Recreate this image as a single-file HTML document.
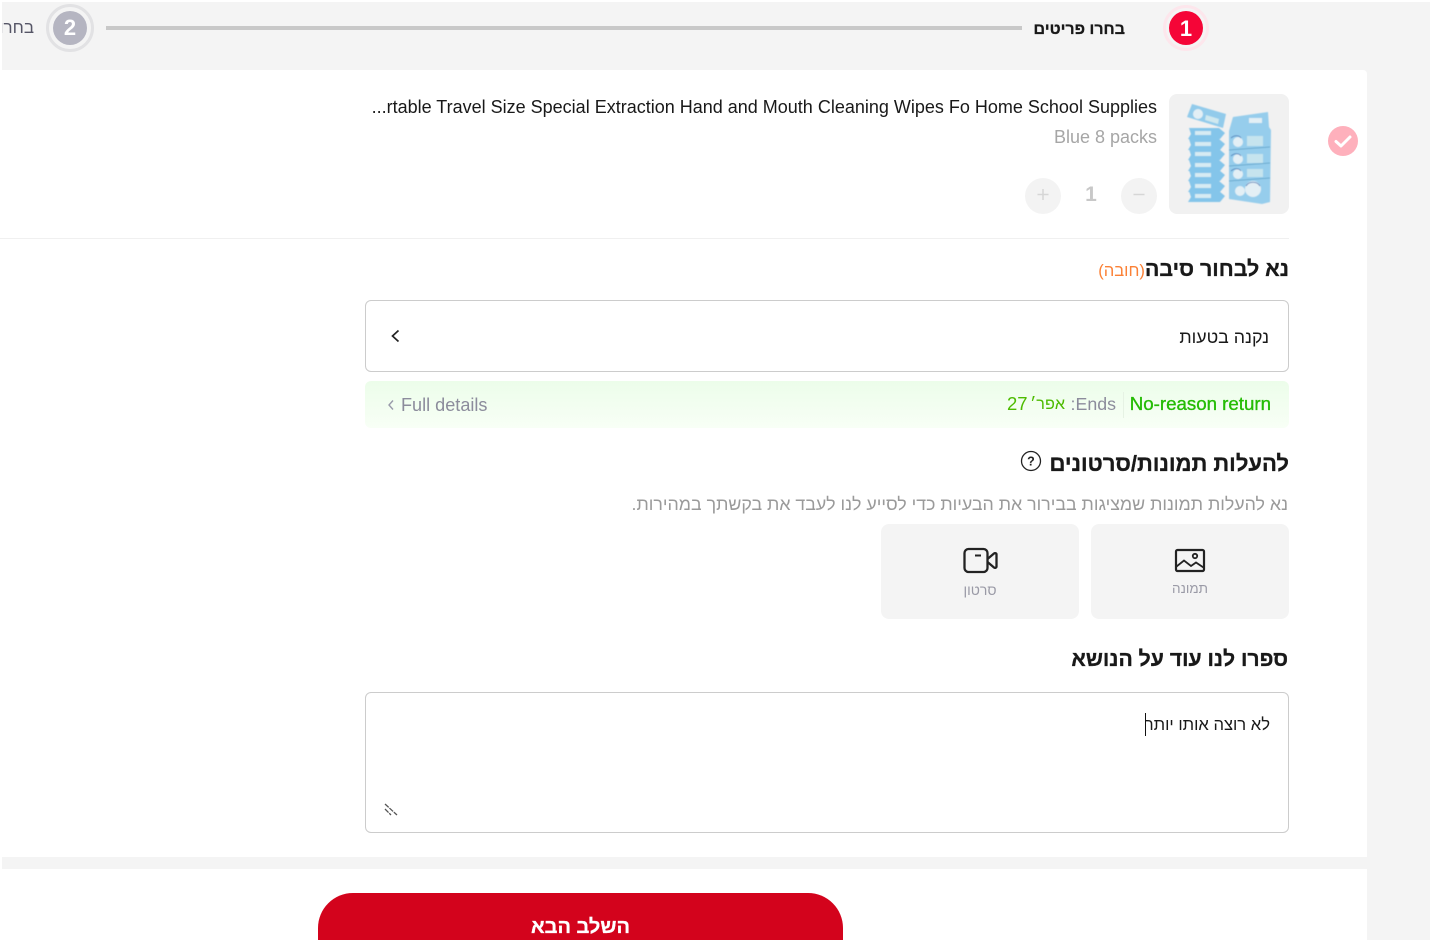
<!DOCTYPE html>
<html lang="he"><head><meta charset="utf-8"><title>החזרה</title>
<style>
html,body{margin:0;padding:0;width:1432px;height:942px;overflow:hidden;background:#fff}
body{position:relative;font-family:"Liberation Sans","DejaVu Sans",sans-serif}
.a{position:absolute;white-space:nowrap}
.r{direction:rtl;text-align:right}
.b{font-weight:700}
.h{-webkit-text-stroke:.3px #191919}
</style></head><body>
<div class="a" style="left:2px;top:2px;width:1428px;height:938px;background:#f4f4f4"></div>
<div class="a" style="left:0;top:70px;width:1367px;height:787px;background:#fff;border-radius:0 4px 0 0"></div>
<div class="a" style="left:0;top:869px;width:1367px;height:73px;background:#fff"></div>

<!-- stepper -->
<div class="a" style="left:106px;top:26px;width:916px;height:4px;background:#c8c8c8"></div>
<div class="a" style="left:1163px;top:5px;width:46px;height:46px;border-radius:50%;border:3px solid #fde6ec;box-sizing:border-box"></div>
<div class="a b" style="left:1169px;top:11px;width:34px;height:34px;line-height:36px;border-radius:50%;background:#f50537;color:#fff;text-align:center;font-size:22px">1</div>
<div class="a r b h" style="right:307px;top:20px;font-size:16px;line-height:20px;color:#191919">בחרו פריטים</div>
<div class="a" style="left:46px;top:4px;width:48px;height:48px;border-radius:50%;border:3px solid #e2e2e4;box-sizing:border-box"></div>
<div class="a b" style="left:53px;top:11px;width:34px;height:34px;line-height:34px;border-radius:50%;background:#b5b5c1;color:#fff;text-align:center;font-size:22px">2</div>
<div class="a" style="left:2px;top:18px;width:32px;height:20px;overflow:hidden"><div class="a r" style="right:0;top:0;font-size:17px;line-height:20px;color:#555566">בחרו פרטי</div></div>

<!-- product row -->
<svg class="a" style="left:1328px;top:126px" width="30" height="30" viewBox="0 0 30 30"><circle cx="15" cy="15" r="15" fill="#feb0bc"/><path d="M8 15.500l5 4.500 9-9" fill="none" stroke="#fff" stroke-width="3" stroke-linecap="round" stroke-linejoin="round"/></svg>
<svg class="a" style="left:1169px;top:94px" width="120" height="120" viewBox="0 0 120 120">
<defs><filter id="s" x="-5%" y="-5%" width="110%" height="110%"><feGaussianBlur stdDeviation=".5"/></filter></defs>
<rect width="120" height="120" rx="8" fill="#f1f1f1"/>
<g filter="url(#s)">
<path d="M23 10l34 10-3 14-36-11z" fill="#92cbeb"/><circle cx="29" cy="20" r="5" fill="#e3eff5"/><path d="M37 21l13 4-1 5-13-4z" fill="#cfe8ef"/>
<g fill="#84c5ea">
<path d="M20 34h30l6 5-5 6H19l3-5z"/><path d="M20 45h30l6 5-5 6H19l3-5z"/><path d="M20 55h30l6 5-5 6H19l3-5z"/><path d="M20 66h30l6 5-5 6H19l3-5z"/><path d="M20 76h30l6 5-5 6H19l3-5z"/><path d="M20 87h30l6 5-5 6H19l3-5z"/><path d="M20 97h30l6 5-5 6H19l3-5z"/>
</g>
<g fill="#d6ebf3"><rect x="26" y="37" width="16" height="4"/><rect x="26" y="48" width="16" height="4"/><rect x="26" y="58" width="16" height="4"/><rect x="26" y="69" width="16" height="4"/><rect x="26" y="79" width="16" height="4"/><rect x="26" y="90" width="16" height="4"/><rect x="26" y="100" width="16" height="4"/></g>
<path d="M64 23l35-5 1 15 2 3 -1 72-8 2-33-5V37z" fill="#96cdec"/>
<g fill="#e3eff5"><circle cx="69" cy="48" r="5"/><circle cx="69" cy="65" r="5"/><circle cx="69" cy="80" r="5"/><circle cx="71" cy="97" r="5"/><circle cx="84" cy="95" r="8"/></g>
<g fill="#c6e4ee"><rect x="78" y="42" width="16" height="10"/><rect x="78" y="60" width="16" height="9"/><rect x="78" y="75" width="16" height="8"/></g>
<g fill="#e3eff5"><rect x="80" y="24" width="13" height="5"/></g>
<path d="M60 56l41-3M60 72l41-3M60 87l41-3" stroke="#5a9fc6" stroke-width=".8" fill="none"/>
<path d="M62 44c3-3 8-3 10 0M62 62c3-3 8-3 10 0M62 77c3-3 8-3 10 0M77 92c3-5 11-5 14 0" stroke="#3f6fb0" stroke-width=".8" fill="none"/>
</g></svg>
<div class="a" style="right:275px;top:96px;font-size:18px;line-height:22px;color:#191919">...rtable Travel Size Special Extraction Hand and Mouth Cleaning Wipes Fo Home School Supplies</div>
<div class="a" style="right:275px;top:127px;font-size:18px;line-height:20px;color:#a6a6a6">Blue 8 packs</div>
<svg class="a" style="left:1025px;top:178px" width="132" height="36" viewBox="0 0 132 36">
<circle cx="18" cy="18" r="18" fill="#f3f3f3"/><circle cx="114" cy="18" r="18" fill="#f3f3f3"/>
<path d="M12.500 16.500h11M18 11v11M108.500 16.500h11" stroke="#d6d6d6" stroke-width="1.500" fill="none"/>
</svg>
<div class="a b" style="left:1075px;top:183px;width:32px;text-align:center;font-size:21px;line-height:24px;color:#c8c8c8">1</div>
<div class="a" style="left:0;top:238px;width:1289px;height:1px;background:#f0f0f0"></div>

<!-- reason -->
<div class="a r" style="right:143px;top:256px;line-height:26px"><span class="b h" style="font-size:21.400px;color:#191919">נא לבחור סיבה</span><span style="font-size:16.600px;color:#fb8136">(חובה)</span></div>
<div class="a" style="left:365px;top:300px;width:924px;height:72px;box-sizing:border-box;border:1px solid #ccc;border-radius:6px"></div>
<div class="a r" style="right:163px;top:326px;font-size:17.800px;line-height:22px;color:#191919">נקנה בטעות</div>
<svg class="a" style="left:389px;top:328px" width="14" height="16" viewBox="0 0 14 16"><path d="M9.500 2.500L3.500 8l6 5.500" fill="none" stroke="#222" stroke-width="1.700"/></svg>

<!-- green bar -->
<div class="a" style="left:365px;top:381px;width:924px;height:47px;border-radius:6px;background:linear-gradient(#ecfdea,#f8fff6)"></div>
<svg class="a" style="left:386px;top:398px" width="10" height="14" viewBox="0 0 10 14"><path d="M7 2.500L3 7l4 4.500" fill="none" stroke="#999aaa" stroke-width="1.400"/></svg>
<div class="a" style="left:401px;top:394px;font-size:18.100px;line-height:22px;color:#8c8c9c">Full details</div>
<div class="a" style="right:161px;top:393px;font-size:18.700px;line-height:22px;color:#25bc05;-webkit-text-stroke:.35px #25bc05">No-reason return</div>
<div class="a" style="left:1123px;top:392px;width:1px;height:26px;background:#e6f2e4"></div>
<div class="a r" style="left:1071px;width:45px;top:393px;font-size:17.800px;line-height:22px;color:#8c8c9c">Ends:</div>
<div class="a" style="left:1007px;top:393px;font-size:18.500px;line-height:22px;color:#4dbb00">27</div>
<div class="a r" style="right:367px;top:393px;font-size:16.200px;line-height:22px;color:#4dbb00">אפר׳</div>

<!-- upload -->
<div class="a r b h" style="right:143px;top:451px;font-size:22px;line-height:26px;color:#191919">להעלות תמונות/סרטונים</div>
<svg class="a" style="left:1020px;top:450px" width="22" height="22" viewBox="0 0 22 22"><circle cx="11" cy="11" r="9.500" fill="none" stroke="#222" stroke-width="1.300"/><text x="11" y="15.500" text-anchor="middle" font-family="Liberation Sans,sans-serif" font-weight="700" font-size="12.500" fill="#222">?</text></svg>
<div class="a r" style="right:144px;top:493px;font-size:17.800px;line-height:22px;color:#9a9a9a">נא להעלות תמונות שמציגות בבירור את הבעיות כדי לסייע לנו לעבד את בקשתך במהירות.</div>
<div class="a" style="left:1091px;top:524px;width:198px;height:95px;border-radius:8px;background:#f4f4f4"></div>
<div class="a" style="left:881px;top:524px;width:198px;height:95px;border-radius:8px;background:#f4f4f4"></div>
<svg class="a" style="left:1174px;top:548px" width="32" height="26" viewBox="0 0 32 26"><rect x="2" y="2" width="28" height="21" rx="1.500" fill="none" stroke="#222" stroke-width="2.200"/><path d="M2.500 18.500l7.500-6 7 5.500 5-3.500 7.500 5" fill="none" stroke="#222" stroke-width="1.800"/><circle cx="21" cy="8" r="2.200" fill="none" stroke="#222" stroke-width="1.800"/></svg>
<svg class="a" style="left:963px;top:546px" width="36" height="30" viewBox="0 0 36 30"><rect x="1.500" y="3" width="23" height="23" rx="4" fill="none" stroke="#222" stroke-width="2.300"/><path d="M12 9.500h6" stroke="#222" stroke-width="2" fill="none"/><path d="M24.500 13l6.500-5.500c1-.8 2.500-.2 2.500 1v12c0 1.200-1.500 1.800-2.500 1L24.500 16" fill="none" stroke="#222" stroke-width="2.300"/></svg>
<div class="a" style="left:1091px;top:581px;width:198px;text-align:center;direction:rtl;font-size:13.500px;line-height:16px;color:#9a9aa6">תמונה</div>
<div class="a" style="left:881px;top:582px;width:198px;text-align:center;direction:rtl;font-size:14px;line-height:16px;color:#9a9aa6">סרטון</div>

<!-- description -->
<div class="a r b h" style="right:144px;top:647px;font-size:21.200px;line-height:26px;color:#191919">ספרו לנו עוד על הנושא</div>
<div class="a" style="left:365px;top:692px;width:924px;height:141px;box-sizing:border-box;border:1px solid #ccc;border-radius:6px"></div>
<div class="a r" style="right:162px;top:714px;font-size:16.600px;line-height:22px;color:#191919">לא רוצה אותו יותר</div>
<div class="a" style="left:1145px;top:713px;width:1px;height:23px;background:#111"></div>
<svg class="a" style="left:383px;top:802px" width="16" height="14" viewBox="0 0 16 14"><path d="M2 2l12 11M2 7l6 6" stroke="#555" stroke-width="1.300" fill="none" stroke-dasharray="5 1"/></svg>

<!-- button -->
<div class="a" style="left:318px;top:893px;width:525px;height:47px;border-radius:35px 35px 0 0;background:#d3031c"></div>
<div class="a r b" style="left:318px;top:914px;width:525px;text-align:center;font-size:20px;line-height:26px;color:#fff;-webkit-text-stroke:.3px #fff">השלב הבא</div>
</body></html>
